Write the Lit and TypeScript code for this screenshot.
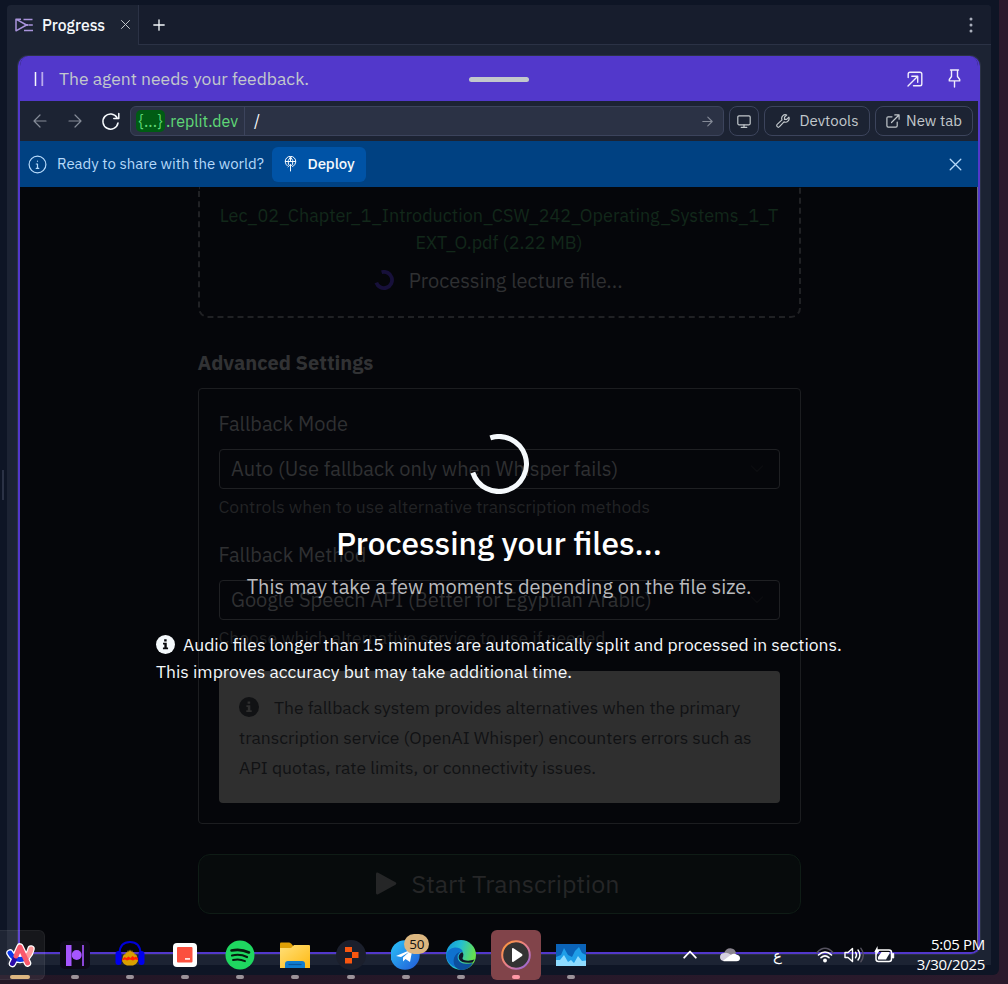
import { LitElement, html, css, svg, TemplateResult } from "lit";
import { customElement } from "lit/decorators.js";

const stroke = (w: number, h: number, body: TemplateResult, sw = 1.2) => html`<svg
  width=${w} height=${h} viewBox="0 0 ${w} ${h}" fill="none" stroke="currentColor"
  stroke-width=${sw} stroke-linecap="round" stroke-linejoin="round">${body}</svg>`;

const infoIcon = (size: number, mark: string) => html`<svg width=${size} height=${size} viewBox="0 0 20 20">
  <circle cx="10" cy="10" r="10" fill="currentColor"></circle>
  <path d="M8.6 4.4h2.6v2.4H8.600zM7.400 8.200h3.900v5h1.400v1.900H7.300v-1.900h1.500v-3.100H7.400z" fill=${mark}></path></svg>`;

/* ---------- Browser preview: tab strip, banner, address bar ---------- */

@customElement("pane-tabs")
class PaneTabs extends LitElement {
  static styles = css`
    :host { display: flex; height: 40px; flex: none; }
    .tab { box-sizing: border-box; width: 131px; display: flex; align-items: center; padding: 0 7px 0 8px; color: #f5f9fc; font-size: 15.750px; font-weight: 500; }
    .tab span { margin-left: 8px; flex: 1; }
    .tab .close { color: #c2c8cc; }
    .strip { flex: 1; box-sizing: border-box; display: flex; align-items: center; justify-content: space-between; background: #171d2d; border-left: 1px solid #2b3245; border-bottom: 1px solid #2b3245; border-radius: 0 4px 0 0; padding: 0 18px 0 14px; color: #f5f9fc; }
    svg { display: block; }
    .dots { color: #a9afbb; }
    .logo { color: #a994dc; }
    .close svg { margin-top: -1px; }
  `;
  render() {
    return html`
      <div class="tab">
        <div class="logo">${stroke(19, 14, svg`<path d="M1 1.200v11.600L11.500 7zM1 1.200l5 0M8.500 1.500h9M13.500 7h4.300M9 12.500h9" stroke-linecap="butt"></path><path d="M10.500 7h2" stroke-width="2"></path>`, 1.5)}</div>
        <span>Progress</span>
        <div class="close">${stroke(11, 11, svg`<path d="M1.500 1.500l8 8M9.500 1.500l-8 8"></path>`, 1)}</div>
      </div>
      <div class="strip">
        ${stroke(12, 12, svg`<path d="M6 .8v10.400M.8 6h10.400"></path>`, 1.3)}
        <svg class="dots" width="4" height="16" viewBox="0 0 4 16" fill="currentColor"><circle cx="2" cy="2" r="1.500"></circle><circle cx="2" cy="8" r="1.500"></circle><circle cx="2" cy="14" r="1.500"></circle></svg>
      </div>`;
  }
}

@customElement("agent-banner")
class AgentBanner extends LitElement {
  static styles = css`
    :host { display: grid; grid-template-columns: 1fr 60px 1fr; align-items: center; height: 45px; flex: none; background: #5238cb; color: #c2c8cc; font-size: 17.500px; }
    svg { display: block; }
    .msg { display: flex; align-items: center; gap: 15px; padding-left: 14px; }
    .grip { height: 5px; border-radius: 3px; background: #c2c8cc; margin-top: 1px; }
    .actions { display: flex; justify-content: flex-end; align-items: center; gap: 25px; padding-right: 17px; color: #f0edfc; }
  `;
  render() {
    return html`
      <div class="msg">
        <svg width="10" height="16" viewBox="0 0 10 16"><path d="M1.500 1v14" stroke="#f5f9fc" stroke-width="1.500"></path><path d="M8.300 1v14" stroke="#b9abec" stroke-width="1.800"></path></svg>
        <span>The agent needs your feedback.</span>
      </div>
      <div class="grip"></div>
      <div class="actions">
        ${stroke(16, 16, svg`<path d="M1.200 6.500V3q0-1.800 1.800-1.800h10q1.800 0 1.800 1.800v10q0 1.800-1.800 1.800H6.500M1 15L10.500 5.500M4.800 5.300h5.900v5.900"></path>`, 1.4)}
        ${stroke(13, 19, svg`<path d="M2.500 1h8M3.500 1v6.500L1.300 10.500v1.400h10.400v-1.400L9.500 7.500V1M6.500 12v6"></path>`, 1.4)}
      </div>`;
  }
}

@customElement("address-bar")
class AddressBar extends LitElement {
  static styles = css`
    :host { display: flex; align-items: center; height: 40px; flex: none; background: #1c2333; color: #c2c8cc; padding: 0 5px 0 13px; gap: 5px; box-sizing: border-box; }
    svg { display: block; }
    .nav { display: flex; align-items: center; gap: 21px; width: 92px; color: #858b98; }
    .nav .on { color: #f5f9fc; margin-left: -2px; }
    .url, .btn { box-sizing: border-box; height: 30px; border: 1px solid #3c445c; display: flex; align-items: center; }
    .url { flex: 1; background: #2b3245; border-radius: 6px; font-size: 16px; color: #5fd877; }
    .host { display: flex; align-items: center; width: 107.500px; height: 28px; padding-left: 5px; border-right: 1px solid #3c445c; }
    .chip { background: #005c14; border-radius: 5px; padding: 0 2.500px; height: 22px; line-height: 22px; margin-right: 1px; width: 24px; text-align: center; }
    .path { flex: 1; color: #f5f9fc; padding-left: 9.500px; }
    .go { color: #858b98; padding-right: 10px; }
    .btn { border-radius: 8px; font-size: 15px; justify-content: center; }
    .btn span { margin-top: -1px; }
    .btn.icon { width: 30px; }
    .btn.dev { width: 106px; gap: 10px; }
    .btn.tab { width: 98px; gap: 6px; }
  `;
  render() {
    return html`
      <div class="nav">
        ${stroke(14, 14, svg`<path d="M13 7H1M7 1L1 7l6 6"></path>`)}
        ${stroke(14, 14, svg`<path d="M1 7h12M7 1l6 6-6 6"></path>`)}
        <div class="on">${stroke(20, 19, svg`<path d="M16 5.500A7.600 7.600 0 1 0 17 11M17.800 1.500v5h-5"></path>`, 1.5)}</div>
      </div>
      <div class="url">
        <div class="host"><span class="chip">{...}</span><span>.replit.dev</span></div>
        <div class="path">/</div>
        <div class="go">${stroke(11, 11, svg`<path d="M.8 5.500h9.400M5.800 1.200l4.400 4.300-4.400 4.300"></path>`, 1.1)}</div>
      </div>
      <div class="btn icon">${stroke(14, 13, svg`<rect x=".8" y=".8" width="12.400" height="9" rx="1.200"></rect><path d="M7 10v2.200M4.200 12.300h5.600"></path>`)}</div>
      <div class="btn dev">${stroke(14, 14, svg`<path d="M12.900 3.200a3.700 3.700 0 0 1-4.900 4.700L3.500 12.700a1.600 1.600 0 0 1-2.300-2.300L6 5.900A3.700 3.700 0 0 1 10.700 1L8.500 3.200v2.200h2.200z"></path>`)}<span>Devtools</span></div>
      <div class="btn tab">${stroke(14, 14, svg`<path d="M6 2.800H2.200Q.9 2.800.9 4.100v7.700q0 1.300 1.300 1.300h7.700q1.300 0 1.300-1.300V8M5.500 8.500L13 1M8.800.9h4.300v4.300"></path>`)}<span>New tab</span></div>`;
  }
}

@customElement("deploy-bar")
class DeployBar extends LitElement {
  static styles = css`
    :host { display: flex; align-items: center; height: 46px; flex: none; background: #004182; color: #b5d9fa; font-size: 15px; padding: 0 16px 0 8px; box-sizing: border-box; }
    svg { display: block; }
    .ask { margin: -1px 8px 0 10px; width: 206.500px; white-space: nowrap; }
    .deploy { display: flex; align-items: center; gap: 11px; width: 94px; height: 35px; box-sizing: border-box; padding-left: 12px; border-radius: 6px; background: #0053a6; color: #f5f9fc; font-weight: 500; letter-spacing: -0.100px; }
    .deploy span { margin-top: -1px; }
    .x { margin-left: auto; }
  `;
  render() {
    return html`
      ${stroke(19, 19, svg`<circle cx="9.500" cy="9.500" r="8.400"></circle><path d="M9.500 9v4.300M9.500 6v.2M8.300 9h1.200M8.200 13.300h2.600"></path>`)}
      <span class="ask">Ready to share with the world?</span>
      <div class="deploy">
        ${stroke(13, 16, svg`<path d="M3.300 9.800A5.300 5.300 0 1 1 9.700 9.800M1.300 5.500h10.400M4.300 8.500Q3.200 4 6.500.8 9.800 4 8.700 8.500M6.500 1v4M6.500 8.500v6.500M4 10.800L6.500 8.300 9 10.800"></path>`, 1)}
        <span>Deploy</span>
      </div>
      <div class="x">${stroke(13, 13, svg`<path d="M1.200 1.200l10.600 10.600M11.800 1.200L1.200 11.800"></path>`, 1.3)}</div>`;
  }
}

/* ---------- Previewed page with its processing overlay ---------- */

@customElement("transcribe-page")
class TranscribePage extends LitElement {
  static styles = css`
    :host { display: block; position: relative; flex: 1; min-height: 0; background: #05060a; overflow: hidden; box-sizing: border-box; border-right: 1px solid #6d7080; color: #2f3032; }
    svg { display: block; }
    .col { width: 603px; margin-left: 177.500px; }
    .drop { box-sizing: border-box; height: 131px; border: 2px dashed #202124; border-top: 0; border-radius: 0 0 10px 10px; padding-top: 15px; text-align: center; }
    .file { font-size: 18px; line-height: 27px; color: #12281a; white-space: nowrap; }
    .busy { display: flex; justify-content: center; align-items: center; gap: 14.500px; font-size: 20px; line-height: 30px; margin: 10px 0 0 -1px; }
    .busy svg { margin-top: -2px; }
    h2 { margin: 33px 0 13px; font-size: 20px; line-height: 24px; font-weight: 700; color: #313234; }
    .card { box-sizing: border-box; height: 436px; border: 1px solid #1c1d20; border-radius: 4px; padding: 20px; }
    label { display: block; font-size: 20px; line-height: 30px; }
    .select { box-sizing: border-box; height: 40px; border: 1px solid #1f2023; border-radius: 4px; margin-top: 10px; padding: 0 15px 0 11.500px; font-size: 20px; display: flex; align-items: center; justify-content: space-between; }
    .select span { margin-top: -2px; }
    .select svg { color: #0b0c10; }
    .help { font-size: 17.500px; line-height: 27px; margin: 3.500px 0 20.500px; color: #222325; }
    .note { box-sizing: border-box; height: 132px; border-radius: 4px; background: #2f2f2f; color: #111214; padding: 22px 20.500px; font-size: 17.500px; line-height: 30px; white-space: nowrap; }
    .note svg { display: inline-block; vertical-align: -2.500px; margin-right: 15px; }
    .start { box-sizing: border-box; height: 60px; margin-top: 30px; border: 1px solid #0f1c16; border-radius: 12px; background: #070b0c; display: flex; align-items: center; justify-content: center; gap: 14px; font-size: 25px; color: #252627; padding: 0 2px 2px 0; }
    .overlay { position: absolute; inset: 0 -1px 0 0; display: flex; flex-direction: column; align-items: center; padding-top: 247px; color: #f5f9fc; }
    .title { font-size: 31.700px; line-height: 38px; font-weight: 500; margin-top: 31px; color: #fff; }
    .sub { font-size: 20px; line-height: 30px; margin-top: 9px; color: #b9babd; }
    .warn { width: 686px; font-size: 17.500px; line-height: 27px; margin-top: 28.500px; white-space: nowrap; color: #f5f9fc; }
    .warn svg { display: inline-block; vertical-align: -3px; margin-right: 8px; }
  `;
  chevron() {
    return stroke(14, 8, svg`<path d="M1.500 1l5.500 5.500L12.500 1"></path>`, 1.6);
  }
  render() {
    return html`
      <div class="col">
        <div class="drop">
          <div class="file">Lec_02_Chapter_1_Introduction_CSW_242_Operating_Systems_1_T<br>EXT_O.pdf (2.22 MB)</div>
          <div class="busy">
            <svg width="20" height="20" viewBox="0 0 20 20" fill="none" stroke="#17103a" stroke-width="3.800"><path d="M7.600 2.200A8.100 8.100 0 1 1 2.300 12.600"></path></svg>
            <span>Processing lecture file...</span>
          </div>
        </div>
        <h2>Advanced Settings</h2>
        <div class="card">
          <label>Fallback Mode</label>
          <div class="select"><span>Auto (Use fallback only when Whisper fails)</span>${this.chevron()}</div>
          <div class="help">Controls when to use alternative transcription methods</div>
          <label>Fallback Method</label>
          <div class="select"><span>Google Speech API (Better for Egyptian Arabic)</span>${this.chevron()}</div>
          <div class="help">Choose which alternative service to use if needed</div>
          <div class="note">${infoIcon(20, "#2f2f2f")}The fallback system provides alternatives when the primary<br>transcription service (OpenAI Whisper) encounters errors such as<br>API quotas, rate limits, or connectivity issues.</div>
        </div>
        <div class="start">
          <svg width="21" height="23" viewBox="0 0 21 23" fill="currentColor"><path d="M0 2Q0 0 2.200.8L19.500 10.300q1.600 1.200 0 2.400L2.200 22.200Q0 23 0 21z"></path></svg>
          <span>Start Transcription</span>
        </div>
      </div>
      <div class="overlay">
        <svg width="60" height="60" viewBox="0 0 60 60" fill="none" stroke="#f5f9fc" stroke-width="5"><path d="M21.300 3.900A27.500 27.500 0 1 1 3.800 38.600"></path></svg>
        <div class="title">Processing your files...</div>
        <div class="sub">This may take a few moments depending on the file size.</div>
        <div class="warn">${infoIcon(19, "#05060a")}Audio files longer than 15 minutes are automatically split and processed in sections.<br>This improves accuracy but may take additional time.</div>
      </div>`;
  }
}

/* ---------- Windows taskbar ---------- */

const apps: { name: string; icon: TemplateResult }[] = [
  { name: "arc", icon: svg`
    <g fill="none" stroke-linecap="round" stroke-linejoin="round">
      <g stroke="#fff" stroke-width="7.500"><path d="M5 13q3 6 10 6.500 9-1 11-10.500M7.500 23.500L15 7l7.500 16"></path></g>
      <path d="M5 13q3 6 10 6.500 4 0 7-3" stroke="#0b37e8" stroke-width="5"></path>
      <path d="M21.500 17q3.500-3 4.500-8" stroke="#ff9a9a" stroke-width="5"></path>
      <path d="M7.500 23.500l2-4" stroke="#2a0aa8" stroke-width="5"></path>
      <path d="M11 16L15 7l7.500 16" stroke="#f9596c" stroke-width="5"></path>
    </g>` },
  { name: "h", icon: svg`<rect x="0" y="1" width="30" height="28" rx="5" fill="#0c0916"></rect><rect x="6" y="5" width="5.500" height="21" fill="#a656ff"></rect><rect x="22" y="5" width="2" height="21" fill="#8a45d6"></rect><circle cx="16.700" cy="15" r="5" fill="#a656ff"></circle>` },
  { name: "audacity", icon: svg`<path d="M4.500 13Q5 2 15 2t10.500 11" fill="none" stroke="#0000d8" stroke-width="2"></path><path d="M7 21l1-5 1.500-2 .5 1 1-3 1 1 1-3 .800 2 1.200-2.500 1.200 2.500.800-2 1 3 1-1 1 3 .500-1L22 16l1 5-2 3-3 1.500h-6L9 24z" fill="#d9a000"></path><path d="M7.500 19l2-2 2 1 2-1.500 2 1.500 2-2 2 1.500 1.500-1 2 2v1.500l-3-.5-2 1-3-1-3 1-2-1-3 1z" fill="#ff2200"></path><rect x="0.500" y="11" width="6" height="14" rx="3" fill="#0000ee"></rect><rect x="23.500" y="11" width="6" height="14" rx="3" fill="#0000ee"></rect>` },
  { name: "recorder", icon: svg`<rect x="3" y="3" width="24" height="24" rx="4" fill="#fff"></rect><rect x="7" y="7" width="15.500" height="15.500" rx="1" fill="#fb503f"></rect><rect x="15" y="18" width="5" height="1.800" fill="#ffe0dc"></rect>` },
  { name: "spotify", icon: svg`<circle cx="15" cy="15" r="14.500" fill="#1fd760"></circle><g fill="none" stroke="#071a0e" stroke-linecap="round"><path d="M6.500 10.500q9.500-2 17.500 2" stroke-width="2.600"></path><path d="M7 15.500q8-2 15 1.500" stroke-width="2.200"></path><path d="M8 20q6.500-1.500 12 1.200" stroke-width="1.900"></path></g>` },
  { name: "explorer", icon: svg`<path d="M0 3.500q0-1 1-1h8q1 0 2 1l2 2v6H0z" fill="#dfa006"></path><path d="M0 8h11l3-3h15q1 0 1 1v22H0z" fill="url(#folder)"></path><path d="M5 28v-4q0-3 3-3h14q3 0 3 3v4z" fill="#0f7cd0"></path><path d="M8.500 24.500h13" stroke="#0a569c" stroke-width="1.200"></path>` },
  { name: "replit", icon: svg`<circle cx="15" cy="15" r="15" fill="#1b1f2c"></circle><path d="M9 7h7v5H9zM16 12h6.500v6H16zM9 18h7v5.500H9z" fill="#f9560f"></path>` },
  { name: "telegram", icon: svg`<circle cx="14" cy="15" r="14.700" fill="url(#tg)"></circle><path d="M5 16L21.500 9 19 22 14.500 19 12 21.500v-4l6-5.500-8 5z" fill="#fff"></path>` },
  { name: "edge", icon: svg`<circle cx="15" cy="15" r="15" fill="url(#edge)"></circle><path d="M0 15Q2 8 9 7.500q6 0 8 4-5 1-5.500 7 3 8 15 4.500A15 15 0 0 1 0 15z" fill="#0f72cf"></path><path d="M11.300 17q1 9 15.500 6.200A14 14 0 0 1 14 30Q6 27 8 18q2-5 6-6-3 3-2.700 5z" fill="#0c4f9e"></path><path d="M18 20q-2.500-1-.800-3.500 1-2.500-1-4.500-4.700 3-3.200 7 3 5 13.500 3.500l2-3q-6 2-10.500.500z" fill="#10162a"></path>` },
  { name: "player", icon: svg`<circle cx="15" cy="15" r="13.800" fill="#333" stroke="url(#ring)" stroke-width="2"></circle><path d="M11 9q0-1.500 1.500-.800L21 14q1 1 0 2l-8.500 5.800Q11 22.500 11 21z" fill="#fff"></path>` },
  { name: "monitor", icon: svg`<rect x="0" y="4" width="30" height="22" fill="#0b63b8"></rect><path d="M0 17l5-2 3-7 4 7 4 2 3-6 4-4 3 6 4 2v11H0z" fill="#1f9ee8"></path><path d="M0 20l4 0 4-5 4 7 3-2 3 3 4-7 4 5 4-.500V26H0z" fill="#8fdcff"></path>` },
];

@customElement("task-bar")
class TaskBar extends LitElement {
  static styles = css`
    :host { display: flex; height: 54px; box-sizing: border-box; color: #fff; font-family: "Open Sans", "Noto Sans", sans-serif; }
    svg { display: block; }
    .app { width: 50px; margin-right: 5.100px; height: 50px; display: flex; flex-direction: column; align-items: center; padding-top: 10px; box-sizing: border-box; border-radius: 6px; position: relative; flex: none; }
    .app i { width: 8px; height: 4px; border-radius: 2px; background: #9b9299; margin-top: 5px; flex: none; }
    .app.arc { margin-left: -5px; background: rgba(255, 255, 255, 0.070); box-shadow: inset 0 0 0 1px rgba(255, 255, 255, 0.050); }
    .app.arc i { width: 20px; background: #dcb680; }
    .app.player { background: #81444a; }
    .app.player i { background: #ff98a5; }
    .badge { position: absolute; left: 23.500px; top: 4px; width: 25px; height: 20px; border-radius: 10px; background: #dcb680; color: #111; font-size: 13.500px; line-height: 20px; text-align: center; letter-spacing: -0.400px; }
    .tray { margin-left: auto; display: flex; align-items: center; padding: 0 23px 5px 0; }
    .tray > * { flex: none; }
    .lang { font-size: 15px; line-height: 20px; margin: 3px 34px 0 33px; font-family: "DejaVu Sans", sans-serif; width: 9px; }
    .clock { text-align: right; font-size: 15px; line-height: 20px; letter-spacing: -0.300px; width: 70px; margin: -1px 0 0 20px; }
    .cloud { margin-left: 23px; }
    .wifi { margin-right: 10px; }
    .vol { margin-right: 9px; }
  `;
  render() {
    return html`
      ${apps.map((a) => html`
        <div class="app ${a.name}">
          <svg width="30" height="30" viewBox="0 0 30 30">
            <defs>
              <linearGradient id="folder" x2="1" y2="1"><stop stop-color="#ffe07a"></stop><stop offset="1" stop-color="#ffb912"></stop></linearGradient>
              <linearGradient id="tg" x2="1" y2="1"><stop stop-color="#29c5fa"></stop><stop offset="1" stop-color="#2359d6"></stop></linearGradient>
              <linearGradient id="edge" x2="1" y2=".3"><stop stop-color="#1193dd"></stop><stop offset=".5" stop-color="#25bfd0"></stop><stop offset="1" stop-color="#66e04e"></stop></linearGradient>
              <linearGradient id="ring" x2="1" y2="1"><stop stop-color="#ff9b2f"></stop><stop offset=".5" stop-color="#e87f8a"></stop><stop offset="1" stop-color="#8a63e0"></stop></linearGradient>
            </defs>
            ${a.icon}
          </svg>
          <i></i>
          ${a.name === "telegram" ? html`<div class="badge">50</div>` : ""}
        </div>`)}
      <div class="tray">
        ${stroke(14, 9, svg`<path d="M1.200 7.700L7 1.500l5.800 6.200"></path>`, 1.8)}
        <svg class="cloud" width="20" height="14" viewBox="0 0 20 14"><path d="M4 5Q6 0 10.500.2 15 .5 16 5l-5 5z" fill="#8b8590"></path><path d="M4.500 13Q0 12.800 0 9q.2-4 4.500-4 3-.8 6 1.500L16 10l-6 3z" fill="#d5cfdf"></path><path d="M3 12.700l8-6q3-2 6 0 3 .5 3 3.500 0 3-3.500 3H5q-1.500 0-2-.5z" fill="#fff"></path></svg>
        <div class="lang">ع</div>
        <svg class="wifi" width="18" height="16" viewBox="0 0 18 16" fill="none" stroke-linecap="round"><path d="M1 5.500q8-8.500 16 0" stroke="#55525f" stroke-width="1.500"></path><path d="M2.500 8q6.500-6 13 0M5 10.700q4-3.500 8 0" stroke="#fff" stroke-width="1.600"></path><circle cx="9" cy="13.500" r="1.900" fill="#fff"></circle></svg>
        <svg class="vol" width="21" height="16" viewBox="0 0 21 16" fill="none" stroke="#fff" stroke-width="1.400" stroke-linecap="round" stroke-linejoin="round"><path d="M1 5.500v5h3l4.500 4V1.500L4 5.500zM11.500 5.200q2 2.800 0 5.600M14 3q3.800 5 0 10"></path><path d="M16.800 1.200q5 6.800 0 13.600" stroke="#55525f"></path></svg>
        <svg width="21" height="17" viewBox="0 0 21 17"><rect x="2" y="4" width="15.500" height="11.500" rx="2.500" fill="none" stroke="#fff" stroke-width="1.500"></rect><path d="M18.500 7.500h1.200v4.500h-1.200z" fill="#fff" stroke="#fff"></path><path d="M4 13.500V11l3.500-5H15.500v1.500L12 13.500z" fill="#fff"></path><path d="M3.500 0L.3 6h2.400L2 9.500 6 4H3.700z" fill="#fff"></path></svg>
        <div class="clock">5:05 PM<br>3/30/2025</div>
      </div>`;
  }
}

/* ---------- Desktop ---------- */

@customElement("app-root")
class AppRoot extends LitElement {
  static styles = css`
    :host { display: block; position: relative; width: 1008px; height: 984px; overflow: hidden; box-sizing: border-box; padding: 0 9px 9px 0; background: linear-gradient(90deg, #221625, #2a1a2c); font-family: "IBM Plex Sans", Roboto, sans-serif; }
    .window { height: 975px; box-sizing: border-box; display: flex; background: #0e1525; border-radius: 0 0 6px 0; padding: 5px 8px 10px 0; }
    .gutter { width: 7px; flex: none; display: flex; align-items: center; padding-left: 2px; box-sizing: border-box; }
    .gutter i { width: 2px; height: 30px; background: #2b3245; }
    .pane { flex: 1; min-width: 0; background: #1c2333; border-radius: 4px 4px 0 0; display: flex; flex-direction: column; padding-bottom: 11px; box-sizing: border-box; }
    .frame { flex: 1; min-height: 0; display: flex; flex-direction: column; margin: 11px 11px 0; border: 2px solid #5238cb; border-top: 0; border-radius: 10px 10px 9px 3px; overflow: hidden; box-shadow: 0 0 0 1px #2b3245; }
    task-bar { position: absolute; left: 0; right: 0; bottom: 0; }
  `;
  render() {
    return html`
      <div class="window">
        <div class="gutter"><i></i></div>
        <div class="pane">
          <pane-tabs></pane-tabs>
          <div class="frame">
            <agent-banner></agent-banner>
            <address-bar></address-bar>
            <deploy-bar></deploy-bar>
            <transcribe-page></transcribe-page>
          </div>
        </div>
      </div>
      <task-bar></task-bar>`;
  }
}
